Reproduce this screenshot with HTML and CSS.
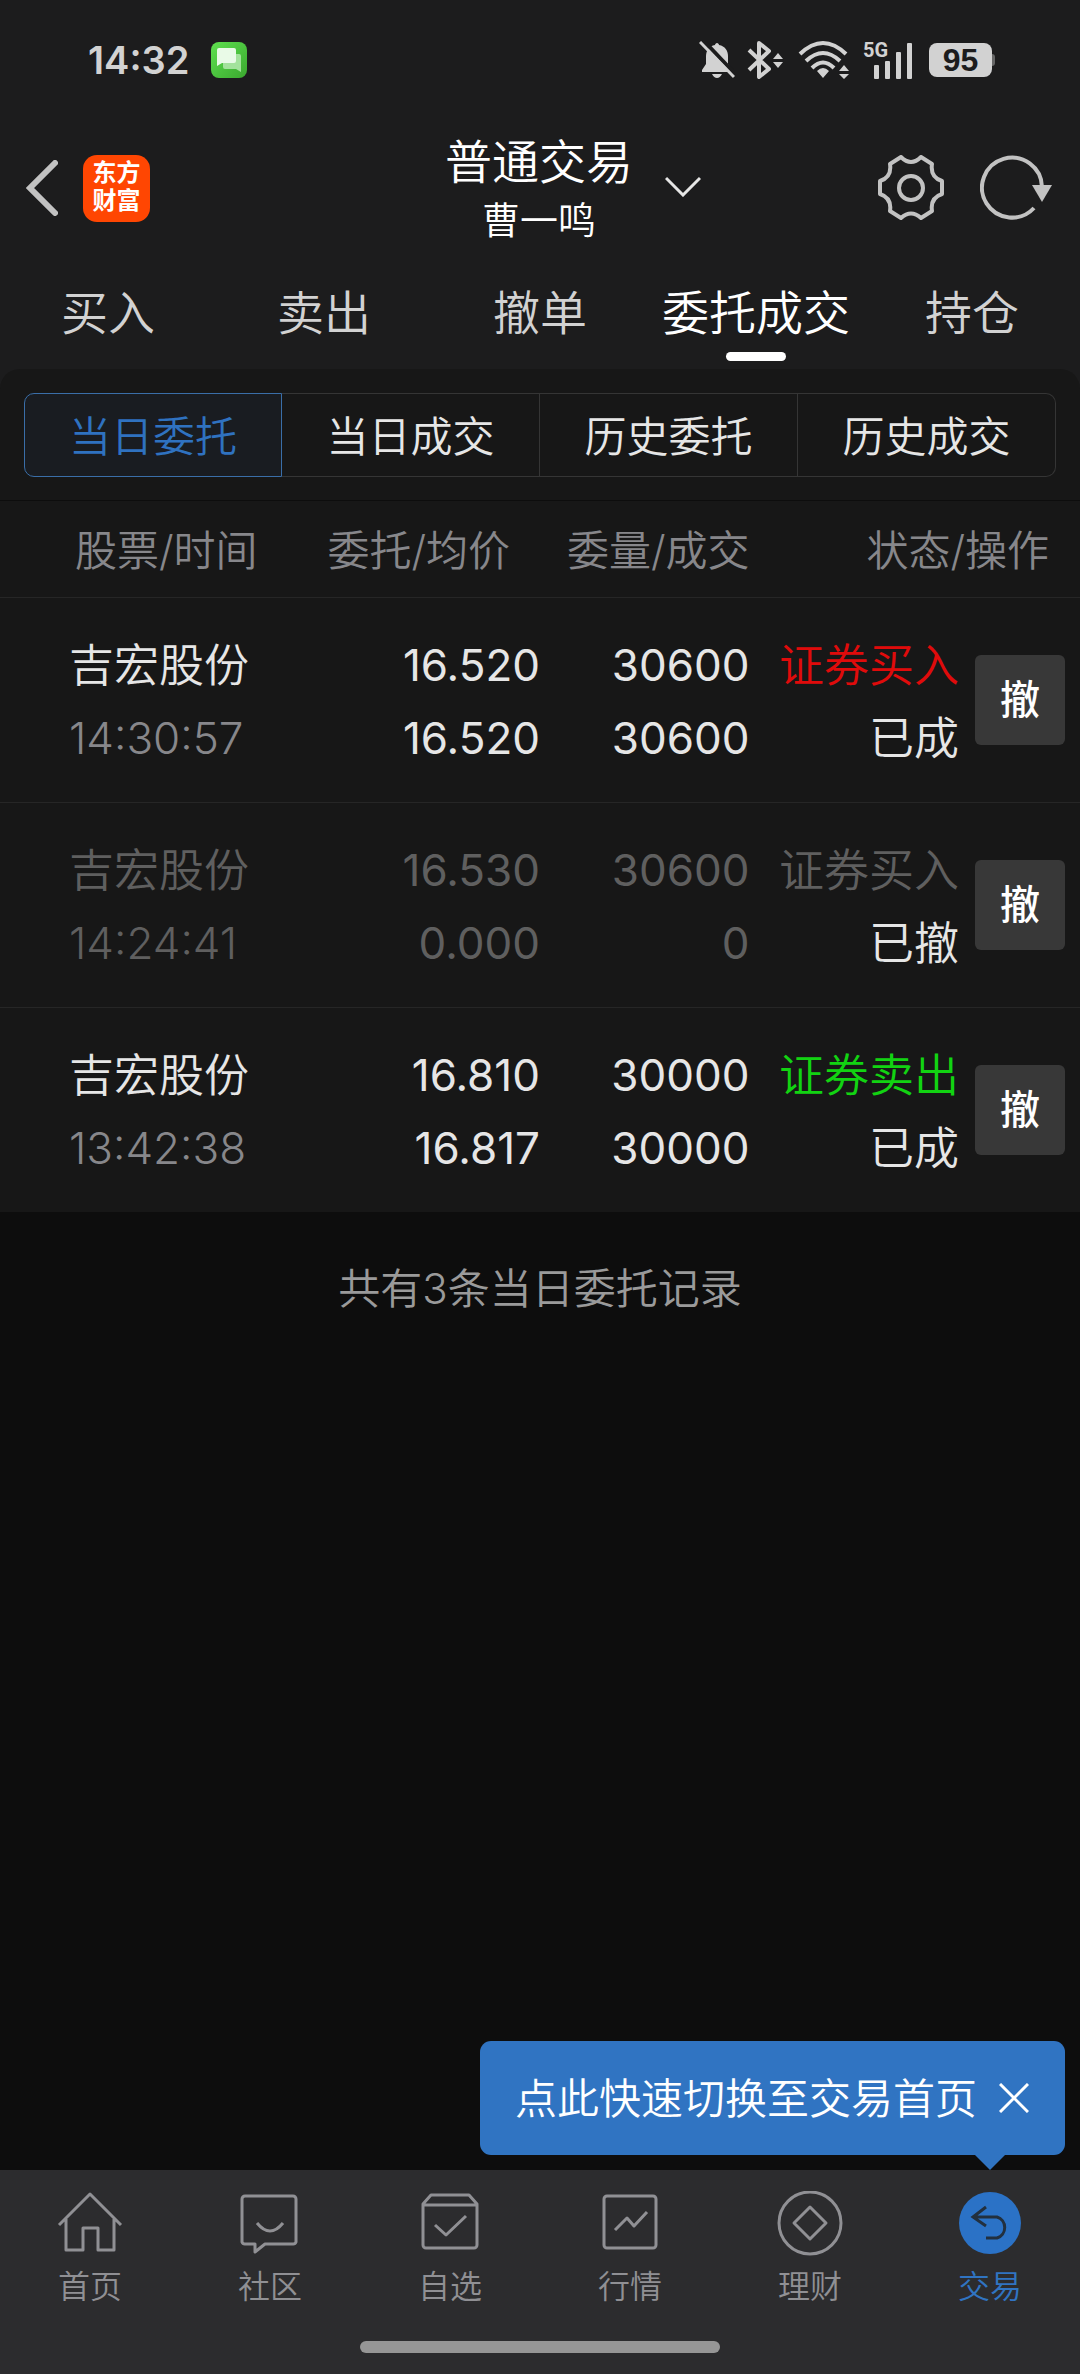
FILE: index.html
```
<!DOCTYPE html>
<html lang="zh-CN">
<head>
<meta charset="utf-8">
<title>普通交易</title>
<meta name="viewport" content="width=device-width, initial-scale=1">
<link rel="stylesheet" href="styles.css">
</head>
<body>
<header class="top">
  <div class="status">
    <time class="clock">14:32</time>
    <svg class="msg" width="36" height="38" viewBox="0 0 36 38" aria-hidden="true">
      <defs>
        <linearGradient id="msgBg" x1="0" y1="0" x2="1" y2="1"><stop offset="0" stop-color="#5fe04f"/><stop offset="1" stop-color="#3aa82f"/></linearGradient>
      </defs>
      <rect y="1" width="36" height="36" rx="8" fill="url(#msgBg)"/>
      <path d="M14 13h14a2 2 0 0 1 2 2v16l-5-3H14a2 2 0 0 1-2-2V15a2 2 0 0 1 2-2z" fill="#a3e29c"/>
      <path d="M8 7h15a2 2 0 0 1 2 2v11a2 2 0 0 1-2 2H11l-5 3V9a2 2 0 0 1 2-2z" fill="#e9fae7"/>
    </svg>
    <div class="signals">
      <svg width="36" height="38" viewBox="0 0 36 38" aria-hidden="true">
        <path d="M18 2c1 0 2 1 2 2 6 1 9 6 9 11v8l4 6v2H3v-2l4-6v-8C7 10 10 5 16 4c0-1 1-2 2-2z" fill="#d2d2d2"/>
        <path d="M13 33h10q-2 4-5 4t-5-4z" fill="#d2d2d2"/>
        <path d="M3 -2L39 36" stroke="#1c1c1d" stroke-width="4"/>
        <path d="M1 1L35 36" stroke="#d2d2d2" stroke-width="3"/>
      </svg>
      <svg class="bt" width="37" height="40" viewBox="0 0 37 40" fill="none" aria-hidden="true">
        <path d="M2 10l20 19-10 8V3l10 8L2 30" stroke="#d2d2d2" stroke-width="4" stroke-linejoin="round"/>
        <path d="M31 13l5 6H26zM31 28l5-6H26z" fill="#d2d2d2"/>
      </svg>
      <svg class="wifi" width="52" height="40" viewBox="0 0 52 40" fill="none" aria-hidden="true">
        <path d="M2 14Q25-8 48 14M8 21Q25 5 42 21M14 28Q25 17 36 28" stroke="#d2d2d2" stroke-width="4"/>
        <path d="M19 31Q25 25 31 31l-6 7zM46 25l5 6H41zM46 39l5-5H41z" fill="#d2d2d2"/>
      </svg>
      <span class="cell"><span class="net">5G</span>
        <svg width="38" height="38" viewBox="0 0 38 38" fill="#d2d2d2" aria-hidden="true"><rect y="24" width="5" height="14" rx="1"/><rect x="11" y="20" width="5" height="18" rx="1"/><rect x="22" y="11" width="5" height="27" rx="1"/><rect x="33" y="2" width="5" height="36" rx="1"/></svg>
      </span>
      <span class="battery">95</span>
    </div>
  </div>

  <div class="bar">
    <div class="bar-side">
      <button class="icon-btn back" aria-label="返回">
        <svg width="32" height="56" viewBox="0 0 32 56" fill="none"><path d="M29 3L4 28l25 25" stroke="#c2c2c2" stroke-width="6" stroke-linecap="round"/></svg>
      </button>
      <a class="brand" href="#">东方<br>财富</a>
    </div>
    <div class="account">
      <h1>普通交易</h1>
      <p>曹一鸣</p>
      <button class="icon-btn switch" aria-label="切换账户">
        <svg width="36" height="21" viewBox="0 0 36 21" fill="none"><path d="M1 2l17 17L35 2" stroke="#e6e6e6" stroke-width="3"/></svg>
      </button>
    </div>
    <div class="bar-side end">
      <button class="icon-btn" aria-label="设置">
        <svg width="66" height="66" viewBox="0 0 66 66" fill="none" stroke="#c2c2c2" stroke-width="4" stroke-linejoin="round">
          <path d="M23 2Q33 12 43 2L54 9Q52 22 64 26V39Q52 43 54 56L43 63Q33 54 23 63L12 56Q14 43 2 39V26Q14 22 12 9Z"/>
          <circle cx="33" cy="33" r="12"/>
        </svg>
      </button>
      <button class="icon-btn" aria-label="刷新">
        <svg width="72" height="68" viewBox="0 0 72 68" fill="none"><path d="M54 54A30 30 0 1 1 62 33" stroke="#c2c2c2" stroke-width="4"/><path d="M52 31h20L62 48z" fill="#c2c2c2"/></svg>
      </button>
    </div>
  </div>

  <nav class="tabs" aria-label="交易">
    <a href="#">买入</a>
    <a href="#">卖出</a>
    <a href="#">撤单</a>
    <a class="on" href="#" aria-current="page">委托成交</a>
    <a href="#">持仓</a>
  </nav>
</header>

<main>
  <section class="panel">
    <div class="segments">
      <button class="on">当日委托</button>
      <button>当日成交</button>
      <button>历史委托</button>
      <button>历史成交</button>
    </div>
    <table class="orders">
      <colgroup><col class="c-name"><col class="c-price"><col class="c-qty"><col class="c-state"><col class="c-act"></colgroup>
      <thead>
        <tr><th class="name" scope="col">股票/时间</th><th class="price" scope="col">委托/均价</th><th scope="col">委量/成交</th><th class="state" scope="col" colspan="2">状态/操作</th></tr>
      </thead>
      <tbody>
        <tr>
          <td class="name"><div>吉宏股份</div><div class="time">14:30:57</div></td>
          <td class="num"><div>16.520</div><div>16.520</div></td>
          <td class="num"><div>30600</div><div>30600</div></td>
          <td><div class="buy">证券买入</div><div>已成</div></td>
          <td class="act"><button>撤</button></td>
        </tr>
        <tr class="void">
          <td class="name"><div>吉宏股份</div><div class="time">14:24:41</div></td>
          <td class="num"><div>16.530</div><div>0.000</div></td>
          <td class="num"><div>30600</div><div>0</div></td>
          <td><div>证券买入</div><div class="lit">已撤</div></td>
          <td class="act"><button>撤</button></td>
        </tr>
        <tr>
          <td class="name"><div>吉宏股份</div><div class="time">13:42:38</div></td>
          <td class="num"><div>16.810</div><div>16.817</div></td>
          <td class="num"><div>30000</div><div>30000</div></td>
          <td><div class="sell">证券卖出</div><div>已成</div></td>
          <td class="act"><button>撤</button></td>
        </tr>
      </tbody>
    </table>
  </section>
  <p class="summary">共有3条当日委托记录</p>
</main>

<footer class="dock">
  <div class="tip" role="status">
    <span>点此快速切换至交易首页</span>
    <button class="icon-btn" aria-label="关闭">
      <svg width="30" height="30" viewBox="0 0 30 30" fill="none"><path d="M1 1l28 28M29 1L1 29" stroke="#fff" stroke-width="3"/></svg>
    </button>
  </div>
  <nav class="dock-nav" aria-label="主导航">
    <a href="#">
      <svg viewBox="0 0 66 66"><path d="M2 34L33 3l31 31M9 28v31h17V37h15v22h16V28"/></svg>
      首页</a>
    <a href="#">
      <svg viewBox="0 0 66 66"><path d="M8 5h48a3 3 0 0 1 3 3v43a3 3 0 0 1-3 2H28l-10 8v-8H8a3 3 0 0 1-3-2V8a3 3 0 0 1 3-3zM20 32q13 16 26 0"/></svg>
      社区</a>
    <a href="#">
      <svg viewBox="0 0 66 66"><path d="M6 13L14 4h38l8 9v41a3 3 0 0 1-3 3H9a3 3 0 0 1-3-3zM6 14h54M18 34l11 10 20-19"/></svg>
      自选</a>
    <a href="#">
      <svg viewBox="0 0 66 66"><rect x="7" y="5" width="52" height="52" rx="3"/><path d="M18 39l12-12 7 8 13-14"/></svg>
      行情</a>
    <a href="#">
      <svg viewBox="0 0 66 66"><circle cx="33" cy="32" r="31"/><path d="M33 16l16 16-16 16-16-16z"/></svg>
      理财</a>
    <a class="on" href="#" aria-current="page">
      <svg viewBox="0 0 66 66"><circle class="disc" cx="33" cy="32" r="31"/><path class="ink" d="M29 16L16 26l13 9M16 26h24a11 11 0 0 1 0 21H29"/></svg>
      交易</a>
  </nav>
  <div class="home-bar"></div>
</footer>
</body>
</html>
```
FILE: styles.css
```
* { box-sizing: border-box; }

body {
  margin: 0;
  min-height: 100vh;
  display: flex;
  flex-direction: column;
  background: #0d0d0d;
  color: #e6e6e6;
  font-family: Inter, "Noto Sans CJK SC", sans-serif;
  font-weight: 350;
}

h1, p { margin: 0; font-weight: 350; }
a { color: inherit; text-decoration: none; }
button {
  margin: 0;
  padding: 0;
  border: 0;
  background: none;
  color: inherit;
  font: inherit;
}
svg { display: block; flex: none; }

.top { background: #1c1c1d; }

/* system status row */
.status {
  display: flex;
  align-items: center;
  height: 120px;
  padding: 0 84px 0 88px;
}
.clock { color: #d2d2d2; font-size: 38px; font-weight: 600; }
.msg { margin-left: 22px; }
.signals { display: flex; align-items: center; margin-left: auto; }
.bt { margin-left: 12px; }
.wifi { margin-left: 14px; }
.cell { display: flex; position: relative; margin-left: 24px; }
.net {
  position: absolute;
  left: -11px;
  top: -2px;
  color: #d2d2d2;
  font: 700 20px/22px Roboto, sans-serif;
}
.battery {
  display: flex;
  align-items: center;
  justify-content: center;
  position: relative;
  width: 63px;
  height: 34px;
  margin: 0 4px 0 17px;
  border-radius: 8px;
  background: #d2d2d2;
  color: #1c1c1d;
  font: 700 32px/34px "Liberation Sans", sans-serif;
}
.battery::after {
  content: "";
  position: absolute;
  left: 100%;
  width: 3px;
  height: 12px;
  border-radius: 0 3px 3px 0;
  background: #666;
}

/* title bar */
.bar {
  display: grid;
  grid-template-columns: 1fr auto 1fr;
  align-items: center;
  height: 136px;
  padding: 0 28px 0 26px;
}
.bar-side { display: flex; align-items: center; gap: 25px; }
.bar-side.end { justify-content: flex-end; gap: 36px; }
.brand {
  width: 67px;
  height: 67px;
  padding-top: 4px;
  border-radius: 14px;
  background: #ff4602;
  color: #fff;
  font-size: 24px;
  font-weight: 700;
  line-height: 28px;
  text-align: center;
}
.account { position: relative; padding-top: 2px; color: #fff; text-align: center; }
.account h1 { font-size: 47px; line-height: 62px; }
.account p { font-size: 38px; line-height: 54px; }
.switch {
  position: absolute;
  left: 100%;
  top: 0;
  bottom: 0;
  display: flex;
  align-items: center;
  margin-left: 32px;
  padding-bottom: 4px;
}

.tabs {
  display: grid;
  grid-template-columns: repeat(5, 1fr);
  height: 113px;
  color: #d2d2d2;
  font-size: 47px;
  line-height: 114px;
  text-align: center;
}
.tabs a { position: relative; white-space: nowrap; }
.tabs .on { color: #fff; }
.tabs .on::after {
  content: "";
  position: absolute;
  left: 50%;
  bottom: 9px;
  width: 60px;
  height: 9px;
  margin-left: -30px;
  border-radius: 5px;
  background: #fff;
}

/* orders */
main { flex: 1; background: linear-gradient(#1c1c1d 40px, #0d0d0d 40px); }
.panel { border-radius: 20px 20px 0 0; background: #171717; }
.segments {
  display: grid;
  grid-template-columns: repeat(4, 1fr);
  padding: 24px 24px 23px;
  border-bottom: 1px solid #0d0d0d;
}
.segments button {
  height: 84px;
  padding-bottom: 4px;
  border: 1px solid #353535;
  border-left-width: 0;
  font-size: 42px;
}
.segments button:last-child { border-radius: 0 10px 10px 0; }
.segments .on {
  border: 1px solid #3a6ea8;
  border-radius: 10px 0 0 10px;
  background: #191c21;
  color: #2f72c0;
}

.orders { width: 100%; border-collapse: collapse; table-layout: fixed; }
.c-name { width: 30%; }
.c-price { width: 20%; }
.c-qty { width: 19.4%; }
.c-state { width: 19.4%; }
.c-act { width: 11.2%; }
.orders th {
  height: 96px;
  padding: 0 0 3px;
  color: #87878b;
  font-size: 42px;
  font-weight: 350;
  text-align: right;
  white-space: nowrap;
}
.orders td {
  padding: 31px 0 27px;
  border-top: 1px solid #262626;
  font-size: 45px;
  line-height: 73px;
  text-align: right;
  white-space: nowrap;
}
.orders td.num { font-size: 44px; font-weight: 400; }
.orders td.name { padding-left: 69px; text-align: left; }
.orders th.name { padding-left: 75px; text-align: left; }
.orders th.price { padding-right: 30px; }
.orders th.state { padding-right: 31px; }
.time { color: #87878b; font-size: 44px; }
.buy { color: #e00b0b; }
.sell { color: #12d312; }
.void, .void .time { color: #5f5f5f; }
.void .lit { color: #e6e6e6; }
.orders td.act { padding: 0 15px 0 0; }
.act button {
  width: 90px;
  height: 90px;
  border-radius: 6px;
  background: #383838;
  color: #fff;
  font-size: 40px;
  font-weight: 500;
  line-height: 90px;
  vertical-align: middle;
}
.summary {
  padding-top: 47px;
  color: #9a9a9a;
  font-size: 42px;
  line-height: 60px;
  text-align: center;
}

/* bottom dock */
.dock { position: relative; padding-bottom: 21px; background: #2c2c2e; }
.tip {
  position: absolute;
  right: 15px;
  bottom: 100%;
  display: flex;
  align-items: center;
  gap: 22px;
  height: 114px;
  margin-bottom: 15px;
  padding: 0 36px 0 35px;
  border-radius: 11px;
  background: #3074c2;
  color: #fff;
  font-size: 42px;
  white-space: nowrap;
}
.tip span { padding-bottom: 6px; }
.tip::after {
  content: "";
  position: absolute;
  right: 60px;
  top: 100%;
  border: 15px solid transparent;
  border-top-color: #3074c2;
  border-bottom: 0;
}
.dock-nav {
  display: grid;
  grid-template-columns: repeat(6, 1fr);
  height: 171px;
  padding-top: 21px;
  color: #909094;
  font-size: 32px;
  line-height: 48px;
}
.dock-nav a { display: flex; flex-direction: column; align-items: center; gap: 6px; }
.dock-nav svg { width: 66px; height: 66px; fill: none; stroke: #909094; stroke-width: 3; stroke-linejoin: round; }
.dock-nav .on { color: #3074c2; }
.dock-nav .disc { fill: #2b72c6; stroke: none; }
.dock-nav .ink { stroke: #22303f; stroke-linejoin: miter; }
.home-bar { width: 33.33%; height: 12px; margin: 0 auto; border-radius: 6px; background: #969696; }
```
